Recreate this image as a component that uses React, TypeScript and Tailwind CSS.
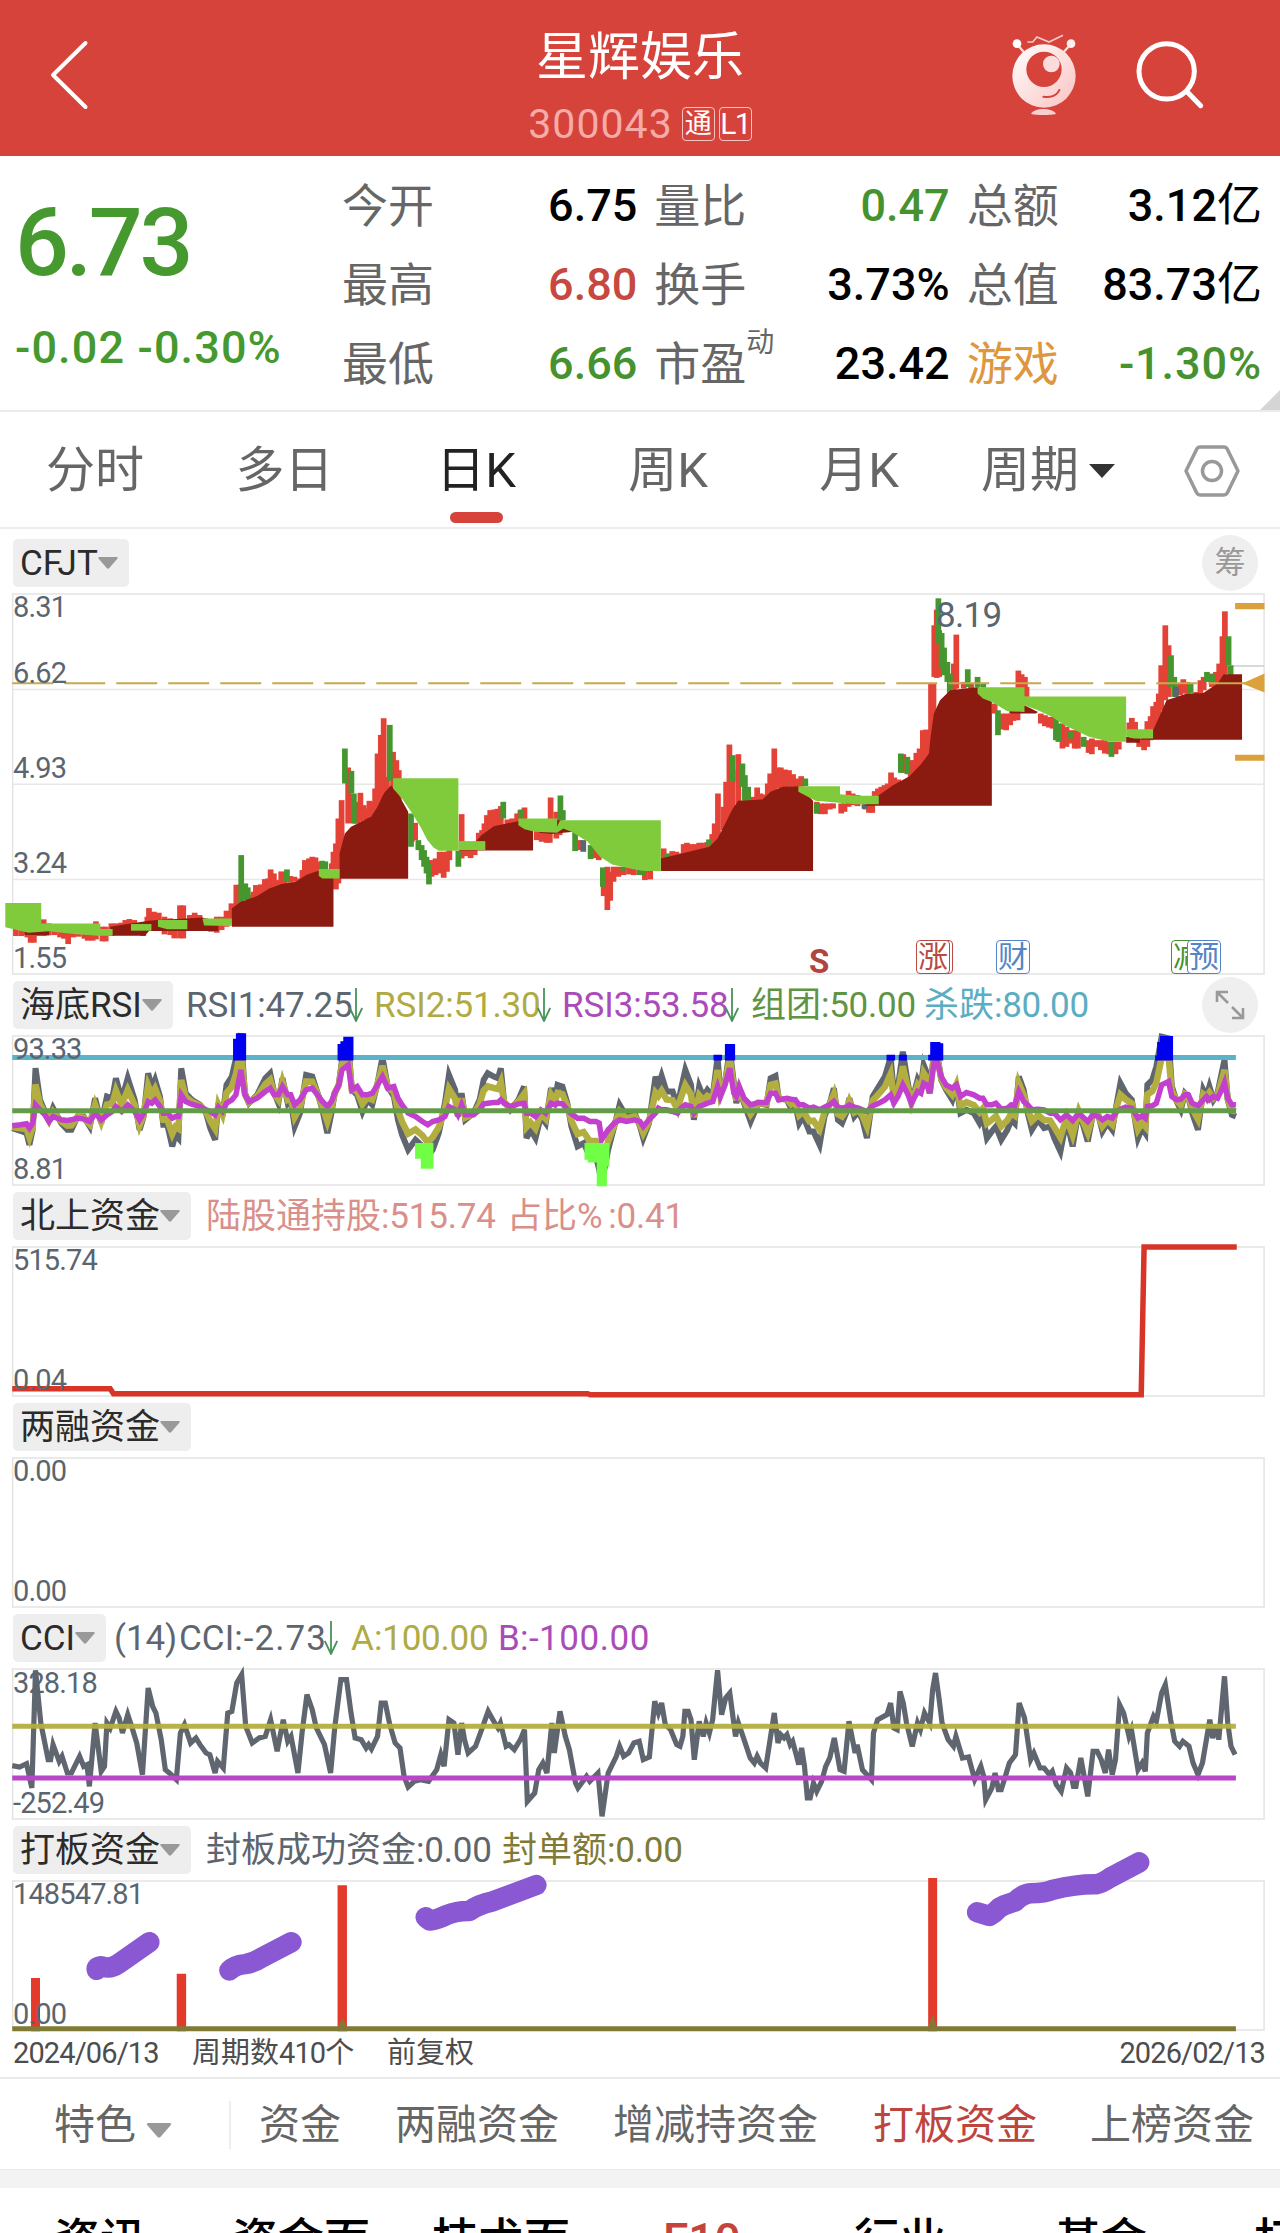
import React from 'react'
import type { ReactNode } from 'react'
import clsx from 'clsx'

type Bar = [number, number, number]

const FONT = "font-[Roboto,'Noto_Sans_CJK_SC',sans-serif]"

// Every chart shares one horizontal scale: 3136 units over the full width,
// and three units per pixel vertically. HALF is where the second half starts.
const HALF = 1568

const parse = (text: string): number[][] =>
  text.trim().split(/\s+/).map((p) => p.split(',').map(Number))

const joinHalves = (left: string, right: string): number[][] => [
  ...parse(left),
  ...parse(right).map(([x, ...rest]) => [x + HALF, ...rest]),
]

const toPoints = (pts: number[][], pick: (p: number[]) => number) =>
  pts.map((p) => `${p[0]},${pick(p)}`).join(' ')

// x, top, bottom
const redBars = joinHalves(
  `32,1190,1218 46,1195,1218 60,1195,1222 68,1195,1238 76,1195,1238 88,1200,1218 100,1168,1218 112,1180,1216
  126,1185,1215 140,1190,1222 150,1190,1226 160,1190,1242 172,1190,1222 186,1190,1220 200,1190,1226 208,1190,1232
  220,1190,1232 228,1174,1228 244,1190,1234 252,1190,1234 266,1180,1218 278,1180,1210 290,1178,1205 300,1170,1205
  310,1167,1205 322,1170,1200 344,1180,1218 354,1160,1200 358,1134,1180 370,1145,1180 382,1148,1180 396,1160,1213
  410,1165,1215 420,1190,1225 434,1126,1225 442,1126,1225 458,1155,1180 470,1148,1170 482,1155,1170 496,1165,1200
  510,1170,1205 524,1160,1208 536,1160,1200 548,1142,1190 560,1120,1180 572,1064,1150 580,1064,1130 606,1095,1110
  614,1085,1110 620,1065,1105 632,1063,1100 642,1047,1090 650,1045,1085 656,1018,1080 664,1030,1075 674,1050,1070
  682,1024,1065 690,1030,1065 704,1038,1058 714,1040,1055 724,1045,1060 734,1020,1050 740,990,1045 750,985,1035
  758,980,1030 766,982,1028 776,995,1025 806,1000,1045 810,965,1060 816,940,1078 822,865,1060 830,810,1000
  846,712,880 862,820,880 868,815,880 876,788,875 884,825,870 892,835,868 898,812,860 906,815,855 912,775,850
  918,670,840 926,614,820 933,564,790 941,740,790 956,665,800 964,690,800 970,720,850 1002,880,935 1010,878,930
  1050,990,1040 1060,985,1035 1070,965,1030 1080,965,1043 1088,965,1025 1094,960,990 1124,852,985 1136,940,978
  1146,950,984 1156,940,975 1166,908,950 1174,900,940 1180,880,930 1186,855,930 1194,840,920 1204,838,900
  1212,836,890 1220,828,890 1236,868,885 1248,865,880 1260,850,880 1268,840,875 1278,832,875 1308,900,930
  1320,905,935 1332,905,938 1340,900,938 1342,802,870 1356,845,925 1364,870,915 1412,930,960 1450,950,984
  1460,960,990 1472,1040,1098 1481,1010,1140 1488,1025,1112 1496,1010,1055 1508,1010,1040 1520,1010,1035
  1534,1010,1033 1546,1015,1035`,
  `5,1020,1050 18,1015,1048 51,955,990 72,963,985 82,965,985 92,970,982 100,942,980 108,938,978 118,942,975
  128,942,975 138,938,970 148,938,965 158,936,960 170,912,950 176,880,945 184,790,935 198,830,900 204,755,890
  212,643,860 220,720,840 234,672,820 270,800,812 280,772,810 288,790,810 298,793,808 306,760,800 312,730,795
  322,655,785 330,712,775 338,712,775 348,718,772 358,720,770 368,732,770 378,745,770 388,738,770 426,815,850
  436,820,852 446,820,852 458,820,838 466,820,835 486,820,850 494,820,845 504,782,830 514,790,825 526,795,828
  546,820,838 554,820,848 562,820,848 568,783,800 576,775,800 584,770,800 592,765,790 600,760,785 608,727,780
  616,742,775 626,748,770 638,672,728 656,690,740 664,690,730 670,668,720 678,655,715 686,600,700 694,598,690
  702,640,680 706,460,660 712,460,600 714,285,440 720,238,443 726,300,440 756,440,490 762,400,480 768,313,475
  786,455,475 804,458,475 862,520,550 880,550,598 890,550,600 900,550,585 908,545,572 918,545,570 920,421,475
  928,432,475 936,440,475 940,470,500 975,550,580 985,555,588 995,560,592 1004,560,595 1028,580,655 1038,590,650
  1048,600,640 1058,600,655 1066,600,655 1092,630,668 1100,625,672 1110,630,650 1122,630,660 1132,630,670
  1142,635,672 1158,635,672 1166,635,658 1192,577,600 1198,563,600 1206,575,600 1216,620,650 1228,625,660
  1236,573,650 1244,558,630 1250,528,620 1258,515,590 1264,490,570 1270,405,540 1280,285,510 1288,345,500
  1316,460,495 1324,447,490 1334,455,490 1356,485,492 1366,450,488 1374,440,480 1394,430,470 1404,425,465
  1412,400,460 1420,318,440 1426,243,432`,
) as Bar[]

const greenBars = joinHalves(
  `584,975,1120 594,1060,1110 600,1072,1110 696,1018,1055 782,992,1020 790,994,1020 838,655,760 854,722,790
  860,790,880 948,584,752 1000,850,950 1018,930,960 1026,945,990 1032,960,1010 1038,980,1030 1044,1000,1063
  1116,962,1010 1226,815,865 1270,838,865 1366,796,870 1372,840,870 1402,905,963 1440,945,987 1470,1012,1070
  1520,1012,1022 1560,1018,1035`,
  `0,1023,1035 60,970,985 162,928,948 220,675,755 244,700,770 250,735,812 258,770,812 398,745,768 426,820,850
  632,670,728 648,680,732 724,204,340 732,308,415 738,352,435 746,395,455 752,430,490 796,417,470 820,440,470
  834,460,472 870,540,615 1012,565,630 1018,580,635 1048,605,625 1080,620,650 1148,635,680 1294,375,470
  1302,440,500 1342,460,488 1382,425,455 1396,432,460 1435,318,405 1440,405,435`,
) as Bar[]

const grayBars = joinHalves('1422,930,965', '1306,470,500 543,822,836') as Bar[]

const maroonAreas = [
  '60,1200 120,1200 120,1216 60,1214',
  '270,1217 270,1190 320,1180 365,1172 385,1170 458,1165 496,1162 535,1180 535,1203 365,1203 355,1217',
  '568,1190 568,1135 590,1115 630,1098 660,1075 690,1062 725,1055 750,1035 780,1022 817,1022 817,1190',
  '832,1046 832,970 845,910 860,890 880,878 910,858 925,830 940,790 958,765 975,790 1000,845 1000,1046',
  '1125,961 1165,935 1180,915 1210,888 1270,873 1306,900 1306,961',
  '1366,870 1380,870 1405,905 1350,912 1320,908',
]

const maroonAreasRight = [
  '51,1023 51,985 110,968 170,950 190,925 205,890 225,840 240,812 300,808 320,785 350,770 390,768 424,812 424,1023',
  '550,827 585,795 620,765 660,738 690,700 708,670 712,620 720,550 735,510 760,480 830,470 862,515 862,827',
  '942,525 975,545 970,550 905,550 905,540',
  '1191,620 1225,625 1225,638 1191,638',
  '1225,629 1257,600 1272,560 1290,510 1340,490 1380,488 1415,460 1430,432 1475,432 1475,629',
]

const limeAreas = [
  '13,1119 101,1119 101,1180 246,1180 246,1197 276,1197 276,1217 240,1217 180,1212 120,1204 70,1208 13,1192',
  '321,1182 371,1182 371,1202 321,1202',
  '387,1170 459,1170 459,1198 410,1198 387,1190',
  '496,1165 568,1165 568,1188 500,1186',
  '781,1017 832,1017 832,1045 790,1045 781,1038',
  '963,744 1123,744 1123,962 1075,962 1062,952 1047,930 1030,890 1010,850 985,805 963,775',
  '1123,933 1189,933 1189,960 1123,960',
  '1270,865 1365,865 1365,890 1372,870 1619,870 1619,1023 1580,1023 1555,1018 1500,1003 1470,980 1440,935 1400,905 1380,895 1365,908 1310,905 1285,897 1270,885',
]

const limeAreasRight = [
  '388,768 490,768 490,792 530,797 585,797 585,822 530,822 430,812 388,785',
  '827,471 942,471 942,499 1191,499 1191,635 1150,635 1100,620 1040,585 1010,560 975,540 942,525 942,545 900,543 862,515 840,505 827,490',
  '1191,597 1257,597 1257,625 1210,625 1191,619',
]

// x, RSI1, RSI3; RSI2 is blended from the two
const rsi = joinHalves(
  `30,475,468 50,483,465 65,490,462 72,525,475 80,480,460 87,295,405 98,390,420 110,425,435 120,450,455 130,415,440
  150,460,450 165,480,452 175,480,450 190,440,445 205,440,448 220,470,455 233,385,430 248,460,450 262,380,435
  275,385,425 284,325,410 298,390,425 313,325,405 330,390,425 342,480,450 352,440,430 363,310,395 372,355,400
  380,330,390 392,380,410 400,465,430 410,465,430 422,530,445 430,495,440 437,505,440 444,295,375 455,370,395
  470,390,403 490,405,410 505,430,420 515,475,425 527,510,435 535,400,412 545,440,425 555,345,400 568,320,390
  578,265,375 590,190,300 600,370,375 610,400,395 630,375,385 650,325,365 662,310,355 672,370,375 682,400,375
  692,325,350 705,400,375 712,390,375 722,470,405 735,430,390 750,315,360 765,320,355 778,370,375 790,420,395
  802,490,410 812,430,395 820,370,370 830,345,345 838,270,300 853,215,285 862,360,360 875,375,350 888,425,375
  900,390,375 912,405,370 925,340,345 937,262,320 950,350,355 965,380,350 975,450,385 985,495,405 1000,540,430
  1018,510,440 1035,530,455 1048,560,465 1060,540,455 1075,490,450 1090,400,440 1100,315,410 1115,360,420
  1122,440,435 1131,370,405 1140,450,435 1160,430,435 1175,390,420 1185,330,402 1195,310,400 1210,320,398
  1220,325,398 1227,295,390 1235,395,400 1250,420,410 1270,390,402 1284,350,400 1290,505,430 1300,480,430
  1312,505,440 1325,440,420 1337,460,430 1350,355,400 1360,390,405 1366,345,400 1378,350,402 1390,400,420
  1400,470,432 1415,530,445 1430,520,445 1445,560,455 1460,560,455 1468,600,460 1474,640,510 1490,540,480
  1505,470,460 1518,405,450 1535,440,455 1555,430,450 1568,470,455`,
  `8,505,470 22,460,450 38,320,430 45,350,415 53,318,420 65,365,420 80,365,425 92,410,430 100,360,415 111,300,405
  125,345,410 132,450,430 145,350,410 155,380,405 165,360,400 178,380,395 190,262,350 197,370,380 208,340,345
  220,240,295 230,340,370 236,400,380 243,360,350 255,400,385 271,455,405 290,400,398 310,405,398 320,325,370
  332,318,370 340,385,390 360,390,385 370,415,388 380,400,390 390,460,405 400,440,405 415,485,415 425,485,412
  440,525,420 452,440,412 465,400,405 475,355,395 485,450,412 495,460,415 505,430,412 513,385,405 525,440,412
  535,425,415 545,450,420 556,505,425 570,380,408 585,350,400 600,320,390 614,262,375 622,370,400 632,350,380
  644,245,345 655,330,370 665,400,400 680,330,365 688,350,370 695,285,340 703,310,345 710,370,370 720,250,280
  728,250,275 738,330,320 750,360,345 765,390,355 775,345,345 785,430,380 800,420,368 818,430,375 832,460,385
  840,440,385 850,505,405 862,485,405 872,470,400 885,510,418 900,480,415 910,450,405 918,460,408 928,320,365
  940,360,395 950,430,405 960,480,420 975,450,418 990,475,420 1005,470,430 1015,505,430 1030,545,450 1045,450,435
  1060,530,452 1075,420,430 1097,515,455 1110,430,435 1122,430,440 1133,485,450 1145,460,440 1157,480,445
  1168,400,425 1177,340,418 1190,370,412 1205,390,415 1220,505,445 1230,475,438 1238,490,445 1243,345,410
  1255,330,408 1265,290,400 1278,200,345 1295,205,335 1303,350,380 1315,395,390 1325,420,388 1335,370,375
  1343,380,375 1353,430,400 1367,480,408 1380,360,390 1388,380,380 1395,350,390 1405,390,380 1415,370,385
  1425,310,360 1432,270,338 1440,390,385 1450,435,405 1460,440,405`,
)

const cci = joinHalves(
  `30,1098 48,1102 65,1092 78,1165 87,812 100,970 118,1080 124,1080 130,1035 145,1085 152,1070 165,1120 175,1120
  195,1070 205,1100 213,1095 219,1160 233,970 248,1115 256,1100 262,970 270,985 284,935 292,955 300,1000 313,945
  325,990 335,1030 349,1125 363,865 374,920 382,940 395,1020 405,1110 415,1120 432,1140 442,1000 452,975 467,1030
  480,1015 490,1035 505,1060 514,1065 527,1120 533,1085 547,1105 558,940 568,935 580,850 592,825 602,980 618,1030
  635,1015 650,1010 663,960 679,1055 694,960 705,1025 713,1010 730,1120 740,1000 752,885 765,930 775,985 795,1035
  810,1120 820,985 835,840 849,840 860,940 870,1015 885,1020 897,1045 903,1035 910,1048 925,1010 934,910 944,910
  955,975 968,1030 980,1045 990,1130 1000,1162 1015,1145 1030,1140 1050,1145 1070,1110 1080,1065 1088,1100
  1100,960 1112,970 1122,1065 1131,970 1138,1020 1147,1060 1165,1040 1180,990 1196,935 1212,970 1220,985 1226,970
  1240,1040 1247,1035 1260,1050 1275,1020 1285,990 1292,1205 1310,1180 1320,1110 1330,1090 1340,1120 1352,970
  1358,1060 1372,935 1385,1010 1395,1050 1410,1150 1416,1165 1437,1130 1445,1145 1465,1120 1475,1250 1490,1120
  1510,1070 1518,1040 1528,1070 1540,1060 1553,1030 1566,1025`,
  `8,1080 23,1072 36,905 45,940 53,910 62,975 75,990 90,1035 98,1040 105,1010 110,935 118,935 125,960 133,1080
  145,965 155,1010 162,970 170,1000 178,960 190,812 200,945 210,895 220,880 234,1010 241,970 255,1020 270,1075
  280,1090 287,1070 295,1090 308,1105 320,1010 329,940 338,1030 345,1005 353,1015 360,1005 368,1035 374,1025
  389,1095 396,1045 403,1100 410,1195 417,1195 425,1150 433,1175 445,1145 455,1100 465,1075 476,1015 490,1110
  500,1115 512,965 527,1060 532,1035 545,1110 567,1140 572,1000 582,960 605,945 614,910 622,985 630,990 637,875
  645,910 653,970 667,1040 680,970 687,990 697,940 710,970 717,870 724,820 733,900 740,970 755,1020 768,1040
  774,1010 790,1075 805,1072 820,1140 835,1100 842,1130 847,1200 862,1165 870,1120 878,1170 885,1170 905,1090
  920,1065 929,910 942,955 957,1080 965,1060 980,1105 990,1105 1003,1125 1010,1115 1020,1155 1032,1175 1045,1105
  1055,1120 1062,1160 1068,1160 1080,1075 1097,1190 1110,1055 1120,1055 1130,1080 1140,1120 1148,1050 1157,1125
  1165,1080 1175,915 1185,940 1198,1010 1204,990 1220,1110 1230,1090 1238,1115 1243,1000 1258,950 1265,965
  1278,880 1287,855 1300,960 1310,1025 1322,1040 1330,1025 1345,1040 1355,1090 1367,1125 1378,1090 1396,960
  1403,1015 1412,975 1418,1020 1432,830 1440,970 1448,1040 1458,1065`,
)

const Caret = ({ className }: { className?: string }) => (
  <svg viewBox="0 0 20 12" className={clsx('h-3 w-5', className)} fill="currentColor">
    <path d="M1.5 0h17c1.2 0 1.6 1 .8 1.8l-8 9.2c-.8.9-1.8.9-2.6 0l-8-9.2C-.1 1 .3 0 1.5 0z" />
  </svg>
)

const Header = () => (
  <header className="grid h-[156px] grid-cols-[1fr_auto_1fr] bg-[#d6433b] text-white">
    <svg viewBox="0 0 40 70" className="mt-10 ml-[49px] h-[70px] w-10" fill="none" stroke="currentColor" strokeWidth="4">
      <path d="M36.5 3 4 35l32.5 32" strokeLinecap="round" strokeLinejoin="round" />
    </svg>
    <div className="flex flex-col items-center">
      <h1 className="mt-7 text-[52px] leading-[60px]">星辉娱乐</h1>
      <div className="mt-[14px] flex h-11 items-center">
        <span className="text-[41px] leading-none tracking-[0.025em] text-[#f5aca8]">300043</span>
        <span className="ml-[9px] flex h-[34px] w-[33px] items-center justify-center rounded-[4px] border border-[#f7c4c1] text-[27px] leading-none">通</span>
        <span className="ml-1 flex h-[34px] w-[33px] items-center justify-center rounded-[4px] border border-[#f7c4c1] text-[30px] leading-none tracking-tighter">L1</span>
      </div>
    </div>
    <svg viewBox="0 0 780 330" className="mt-5 mr-10 h-[110px] w-[260px] justify-self-end">
      <defs>
        <linearGradient id="robot" x1="0" y1="0" x2="1" y2="1">
          <stop offset="0" stopColor="#fff" />
          <stop offset="1" stopColor="#f9c3c1" />
        </linearGradient>
      </defs>
      <path d="M142 66h16l13-15 36 15 42-20" fill="none" stroke="#f9c9c7" strokeWidth="5" />
      <path d="m111 72 22 26M273 72l-24 26" stroke="#fbdcdb" strokeWidth="7" />
      <circle cx="111" cy="71" r="13" fill="#fff" />
      <circle cx="273" cy="71" r="13" fill="#fdeeee" />
      <circle cx="192" cy="168" r="95" fill="url(#robot)" />
      <circle cx="192" cy="148" r="53" fill="#d6433b" />
      <circle cx="214" cy="132" r="25" fill="#fbdcdb" />
      <path d="M190 230c22 4 42-4 48-20" fill="none" stroke="#d6433b" strokeWidth="6" strokeLinecap="round" />
      <path d="M153 282c8-20 66-20 75 0-20 4-55 4-75 0z" fill="#f9cfcd" />
      <g fill="none" stroke="#fff" strokeWidth="15" strokeLinecap="round">
        <circle cx="560" cy="154" r="83" />
        <path d="m622 216 40 41" />
      </g>
    </svg>
  </header>
)

const quoteColumns = [
  [
    ['今开', '6.75', 'text-black'],
    ['最高', '6.80', 'text-[#c74840]'],
    ['最低', '6.66', 'text-[#46922f]'],
  ],
  [
    ['量比', '0.47', 'text-[#46922f]'],
    ['换手', '3.73%', 'text-black'],
    ['市盈', '23.42', 'text-black'],
  ],
  [
    ['总额', '3.12亿', 'text-black'],
    ['总值', '83.73亿', 'text-black'],
    ['游戏', '-1.30%', 'text-[#46922f]'],
  ],
]

const Quote = () => (
  <section className="relative flex h-64 border-b-2 border-[#ebebeb] pt-[10px] pr-[18px]">
    <div className="w-[342px] pl-[15px] font-medium text-[#46992f]">
      <div className="mt-[22px] text-[95px] leading-[110px] tracking-[-0.035em]">6.73</div>
      <div className="mt-[24px] text-[45px] leading-[52px] tracking-[0.025em] whitespace-nowrap">-0.02 -0.30%</div>
    </div>
    <div className="grid flex-1 grid-cols-3 gap-x-[17px]">
      {quoteColumns.map((rows, i) => (
        <dl key={i}>
          {rows.map(([label, value, color]) => (
            <div key={label} className="flex h-[79px] items-center justify-between leading-none">
              <dt className={clsx('flex text-[46px]', label === '游戏' ? 'text-[#dd9740]' : 'text-[#666]')}>
                {label}
                {label === '市盈' && <sup className="-top-3 text-[28px] leading-none">动</sup>}
              </dt>
              <dd className={clsx('flex items-center text-[45px] font-medium', color, value.startsWith('-') && 'tracking-[0.02em]')}>
                <span>{value.replace(/[亿%]/, '')}</span>
                {value.endsWith('%') && <span>%</span>}
                {value.endsWith('亿') && <span className="font-normal">亿</span>}
              </dd>
            </div>
          ))}
        </dl>
      ))}
    </div>
    <svg viewBox="0 0 20 20" className="absolute right-0 bottom-0 size-5">
      <path d="M20 0v20H0z" fill="#d5d5d5" />
    </svg>
  </section>
)

const periods = [
  ['分时', 'w-[190px]'],
  ['多日', 'w-[189px]'],
  ['日K', 'w-[194px]'],
  ['周K', 'w-[190px]'],
  ['月K', 'w-[192px]'],
]

const PeriodTabs = () => (
  <nav className="flex h-[117px] items-center border-b-2 border-[#ececec] pt-0.5 text-[49px] leading-none text-[#666]">
    {periods.map(([label, width]) => (
      <div key={label} className={clsx('relative flex h-full items-center justify-center', width, label === '日K' && 'text-[#222]')}>
        {label}
        {label === '日K' && <span className="absolute bottom-1 left-[71px] h-[11px] w-[53px] rounded-full bg-[#d6433b]" />}
      </div>
    ))}
    <div className="ml-[26px] flex items-center">
      周期
      <svg viewBox="0 0 26 14" className="ml-2.5 h-3.5 w-[26px]" fill="#333">
        <path d="M0 0h26L13 14z" />
      </svg>
    </div>
    <svg viewBox="0 0 56 52" className="ml-[69px] h-[52px] w-14" fill="none" stroke="#999" strokeWidth="3.5">
      <path d="M16 2h24q2 0 3 1.6L54 26 43 48.4q-1 1.6-3 1.6H16q-2 0-3-1.6L2 26 13 3.6Q14 2 16 2z" strokeLinejoin="round" />
      <circle cx="28" cy="26" r="9.5" />
    </svg>
  </nav>
)

const Pill = ({ children }: { children: ReactNode }) => (
  <div className="ml-[13px] flex h-12 items-center rounded-[5px] bg-[#eee] pr-[11px] pl-[7px] text-[35px] leading-none text-[#2b2b2b]">
    {children}
    <Caret className="text-[#999]" />
  </div>
)

const Arrow = () => (
  <svg viewBox="0 0 14 34" className="-ml-[3px] h-[34px] w-3.5 shrink-0" fill="none" stroke="#46945a" strokeWidth="1.8">
    <path d="M7 0v33M.8 20 7 33l6.2-13" />
  </svg>
)

const Legend = ({ className, children }: { className?: string; children: ReactNode }) => (
  <span className={clsx('flex shrink-0 items-center text-[35px] leading-none whitespace-nowrap', className)}>{children}</span>
)

const Num = ({ children }: { children: ReactNode }) => <span className="font-[450] tracking-[-0.006em]">{children}</span>

const PanelHead = ({ title, children }: { title: string; children?: ReactNode }) => (
  <div className="my-[7px] flex h-12 items-center">
    <Pill>{title}</Pill>
    {children}
  </div>
)

const RoundButton = ({ children }: { children: ReactNode }) => (
  <div className="mr-[22px] ml-auto flex size-14 items-center justify-center rounded-full bg-[#efefef] text-[31px] text-[#999]">{children}</div>
)

const AxisLabel = ({ className, children }: { className: string; children: ReactNode }) => (
  <span className={clsx('absolute left-[13px] text-[29px] leading-[30px] tracking-[-0.03em] text-[#5a6570]', className)}>{children}</span>
)

type ChartProps = { top: number; height: number; className: string; children?: ReactNode; labels?: ReactNode }

const Chart = ({ top, height, className, children, labels }: ChartProps) => (
  <div className={clsx('relative', className)}>
    <svg
      viewBox={`0 ${top} 3136 ${height}`}
      preserveAspectRatio="none"
      className="block size-full overflow-visible [&_*]:[vector-effect:non-scaling-stroke]"
      fill="none"
    >
      <rect x="31" y={top} width="3066" height={height} stroke="#e4e4e4" strokeWidth="1.5" />
      {children}
    </svg>
    {labels}
  </div>
)

const Bars = ({ data, fill }: { data: Bar[]; fill: string }) => (
  <g fill={fill}>
    {data.map(([x, top, bottom], i) => (
      <rect key={i} x={x} y={top} width={14} height={bottom - top} />
    ))}
  </g>
)

const Areas = ({ left, right, fill }: { left: string[]; right: string[]; fill: string }) => (
  <g fill={fill}>
    {left.map((p) => <polygon key={p} points={p} />)}
    <g transform={`translate(${HALF} 0)`}>
      {right.map((p) => <polygon key={p} points={p} />)}
    </g>
  </g>
)

const Marker = ({ className, children }: { className: string; children?: ReactNode }) => (
  <span className={clsx('absolute flex h-[34px] w-[34px] items-center justify-center rounded-[4px] border-[1.5px] border-current bg-white text-[30px] leading-none', className)}>
    {children}
  </span>
)

const PriceChart = () => (
  <Chart
    top={191}
    height={1141}
    className="h-[380px]"
    labels={
      <>
        <AxisLabel className="-top-0.5">8.31</AxisLabel>
        <AxisLabel className="top-[64px]">6.62</AxisLabel>
        <AxisLabel className="top-[159px]">4.93</AxisLabel>
        <AxisLabel className="top-[254px]">3.24</AxisLabel>
        <AxisLabel className="top-[349px]">1.55</AxisLabel>
        <span className="absolute top-1 left-[936px] text-[35px] leading-[36px] tracking-[-0.02em] text-[#5a6570]">8.19</span>
        <span className="absolute top-[353px] left-[809px] text-[33px] leading-[30px] font-bold text-[#b0453f]">S</span>
        <Marker className="top-[346px] left-[919px] text-[#b94a44]" />
        <Marker className="top-[346px] left-[916px] text-[#b94a44]">涨</Marker>
        <Marker className="top-[346px] left-[996px] text-[#5585c5]">财</Marker>
        <Marker className="top-[346px] left-[1171px] text-[#46922f]">减</Marker>
        <Marker className="top-[346px] left-[1187px] text-[#5585c5]">预</Marker>
      </>
    }
  >
    <path d="M31 478H3097M31 762H3097M31 1048H3097" stroke="#e8e8e8" strokeWidth="1.5" />
    <path d="M3018 407h79" stroke="#ccc" strokeWidth="1.5" />
    <Bars data={redBars} fill="#e44236" />
    <Bars data={greenBars} fill="#46962f" />
    <Bars data={grayBars} fill="#5b6670" />
    <Areas left={maroonAreas} right={maroonAreasRight} fill="#8b1b11" />
    <Areas left={limeAreas} right={limeAreasRight} fill="#80cb3c" />
    <path d="M30 459H3050" stroke="#c9a84c" strokeWidth="2" strokeDasharray="41 11" />
    <path d="M3043 460l55-30v57zM3026 218h72v19h-72zM3026 674h72v18h-72z" fill="#dba13c" />
  </Chart>
)

const RsiChart = () => (
  <Chart
    top={198}
    height={448}
    className="h-[149px]"
    labels={
      <>
        <AxisLabel className="-top-0.5">93.33</AxisLabel>
        <AxisLabel className="bottom-px">8.81</AxisLabel>
      </>
    }
  >
    <polyline points={toPoints(rsi, (p) => p[1])} stroke="#5f666f" strokeWidth="6" />
    <polyline points={toPoints(rsi, (p) => p[1] * 0.56 + p[2] * 0.44)} stroke="#b3ae40" strokeWidth="6.5" />
    <polyline points={toPoints(rsi, (p) => p[2])} stroke="#c340cf" strokeWidth="5.5" />
    <path d="M30 263H3028" stroke="#5cb2c9" strokeWidth="5" />
    <path d="M30 423H3028" stroke="#649b48" strokeWidth="5" />
    <path
      fill="#0000f0"
      d="M571 206h7v-16h25v82h-32zM827 222h7v-8h7v-14h25v72h-39zM1748 254h21v18h-21zM1776 222h25v50h-25zM2172 254h21v18h-21zM2202 254h20v18h-20zM2274 254h5v-38h25v4h7v52h-37zM2830 256h5v-40h7v-18h32v74h-44z"
    />
    <path
      fill="#70ff45"
      d="M1017 520h45v77h-31v-30h-14zM1432 520h61v70h-6v60h-25v-72h-22v-8h-8z"
    />
  </Chart>
)

const NorthChart = () => (
  <Chart
    top={831}
    height={449}
    className="h-[149px]"
    labels={
      <>
        <AxisLabel className="-top-0.5">515.74</AxisLabel>
        <AxisLabel className="bottom-px">0.04</AxisLabel>
      </>
    }
  >
    <path d="M30 1258H270L278 1273H1440L1446 1276H2796L2803 831H3030" stroke="#d83529" strokeWidth="5.5" />
  </Chart>
)

const CciChart = () => (
  <Chart
    top={808}
    height={450}
    className="h-[150px]"
    labels={
      <>
        <AxisLabel className="-top-px">328.18</AxisLabel>
        <AxisLabel className="bottom-px">-252.49</AxisLabel>
      </>
    }
  >
    <polyline points={toPoints(cci, (p) => p[1])} stroke="#5f666f" strokeWidth="5.2" />
    <path d="M30 980H3028" stroke="#b3ae40" strokeWidth="5" strokeOpacity=".95" />
    <path d="M30 1135H3028" stroke="#b945c8" strokeWidth="5" />
  </Chart>
)

const BoardChart = () => (
  <Chart
    top={213}
    height={448}
    className="h-[149px]"
    labels={
      <>
        <AxisLabel className="-top-0.5">148547.81</AxisLabel>
        <AxisLabel className="bottom-px">0.00</AxisLabel>
      </>
    }
  >
    <path d="M76 505h22v160h-22zM433 492h23v173h-23zM827 226h23v439h-23zM2274 204h22v461h-22z" fill="#e33a2c" />
    <path d="M30 657H3028" stroke="#7f7a35" strokeWidth="5" />
    <path d="M828 650l11-24 11 24zM2275 650l10-34 10 34z" fill="#7f7a35" />
    {/* hand-drawn marks */}
    <g stroke="#8a58d3" strokeWidth="20.5" strokeLinecap="round" strokeLinejoin="round">
      <path d="M237 480Q236 470 247 469Q270 480 290 462L366 397" />
      <path d="M562 482Q575 466 600 463Q620 460 640 444L714 397" />
      <path d="M1043 322L1053 332Q1075 328 1095 315Q1120 302 1150 303Q1175 282 1205 275L1314 225" />
      <path d="M2394 307L2424 318Q2436 310 2448 294L2462 285Q2475 280 2488 274Q2505 252 2525 250Q2560 250 2580 239Q2640 222 2685 223Q2700 220 2720 203L2791 157" />
    </g>
  </Chart>
)

const ExpandIcon = () => (
  <svg viewBox="0 0 30 30" className="size-[30px]" fill="none" stroke="#999" strokeWidth="2.6">
    <path d="M2 12V2h11M2 2l11 11M28 18v10H17M28 28 17 17" />
  </svg>
)

const fundTabs = [
  ['资金', 'w-[136px]'],
  ['两融资金', 'w-[218px]'],
  ['增减持资金', 'w-[260px]'],
  ['打板资金', 'w-[217px]'],
  ['上榜资金', 'w-[180px]'],
]

const pageTabs = [
  ['资讯', 'w-[178px]'],
  ['资金面', 'w-[200px]'],
  ['技术面', 'w-[231px]'],
  ['F10', 'w-[191px]'],
  ['行业', 'w-[201px]'],
  ['基金', 'w-[199px]'],
  ['打板', 'w-[100px]'],
]

const App = () => {
  return (
    <main className={clsx('h-[2233px] w-[1280px] overflow-hidden bg-white', FONT)}>
      <Header />
      <Quote />
      <PeriodTabs />
      <div className="h-[65px] pt-[3px]">
        <PanelHead title="CFJT">
          <RoundButton>筹</RoundButton>
        </PanelHead>
      </div>
      <PriceChart />
      <PanelHead title="海底RSI">
        <Legend className="ml-[13px] w-[188px] text-[#5d656f]">RSI<Num>1:47.25</Num><Arrow /></Legend>
        <Legend className="w-[188px] text-[#b0aa42]">RSI<Num>2:51.30</Num><Arrow /></Legend>
        <Legend className="w-[189px] text-[#ab4bb9]">RSI<Num>3:53.58</Num><Arrow /></Legend>
        <Legend className="w-[173px] text-[#5f9445]">组团<Num>:50.00</Num></Legend>
        <Legend className="text-[#5badc2]">杀跌<Num>:80.00</Num></Legend>
        <RoundButton><ExpandIcon /></RoundButton>
      </PanelHead>
      <RsiChart />
      <PanelHead title="北上资金">
        <Legend className="ml-[15px] w-[301px] text-[#d98f8a]">陆股通持股<Num>:515.74</Num></Legend>
        <Legend className="text-[#d98f8a]">占比<span className="tracking-[0.16em]">%</span><Num>:0.41</Num></Legend>
      </PanelHead>
      <NorthChart />
      <PanelHead title="两融资金" />
      <Chart
        top={175}
        height={449}
        className="h-[149px]"
        labels={
          <>
            <AxisLabel className="-top-0.5">0.00</AxisLabel>
            <AxisLabel className="bottom-px">0.00</AxisLabel>
          </>
        }
      />
      <PanelHead title="CCI">
        <Legend className="ml-2 w-[65px] text-[#5d656f]">(<Num>14</Num>)</Legend>
        <Legend className="w-[172px] text-[#5d656f]">CCI<span className="font-[450] tracking-[0.03em]">:-2.73</span><Arrow /></Legend>
        <Legend className="w-[147px] text-[#b0aa42]">A<Num>:100.00</Num></Legend>
        <Legend className="text-[#ab4bb9]">B<span className="font-[450] tracking-[0.015em]">:-100.00</span></Legend>
      </PanelHead>
      <CciChart />
      <PanelHead title="打板资金">
        <Legend className="ml-[15px] w-[296px] text-[#5d656f]">封板成功资金<Num>:0.00</Num></Legend>
        <Legend className="text-[#7f7a35]">封单额<Num>:0.00</Num></Legend>
      </PanelHead>
      <BoardChart />
      <div className="flex h-[49px] items-center border-b-2 border-[#ebebeb] pr-[15px] pl-[13px] text-[29px] leading-none text-[#4d4d4d]">
        <span className="w-[179px] tracking-[-0.03em]">2024/06/13</span>
        <span className="w-[195px]">周期数<span className="tracking-[-0.03em]">410</span>个</span>
        <span>前复权</span>
        <span className="ml-auto tracking-[-0.03em]">2026/02/13</span>
      </div>
      <div className="flex h-[91px] items-center border-b border-[#e8e8e8] pt-0.5 pl-[54px] text-[41px] leading-none whitespace-nowrap text-[#666]">
        特色
        <Caret className="mt-2.5 ml-[10px] h-[15px] w-[26px] text-[#999]" />
        <span className="mr-[28px] ml-[57px] h-12 w-0.5 bg-[#eee]" />
        {fundTabs.map(([label, width]) => (
          <span key={label} className={clsx('shrink-0', width, label === '打板资金' && 'text-[#bd453e]')}>{label}</span>
        ))}
      </div>
      <div className="h-[18px] bg-[#f3f3f3]" />
      <div className="flex pt-[29px] pl-[54px] text-[46px] leading-[46px] font-medium whitespace-nowrap text-black">
        {pageTabs.map(([label, width]) => (
          <span key={label} className={clsx('shrink-0', width, label === 'F10' && 'text-[#c4443d]')}>{label}</span>
        ))}
      </div>
    </main>
  )
}

export default App
